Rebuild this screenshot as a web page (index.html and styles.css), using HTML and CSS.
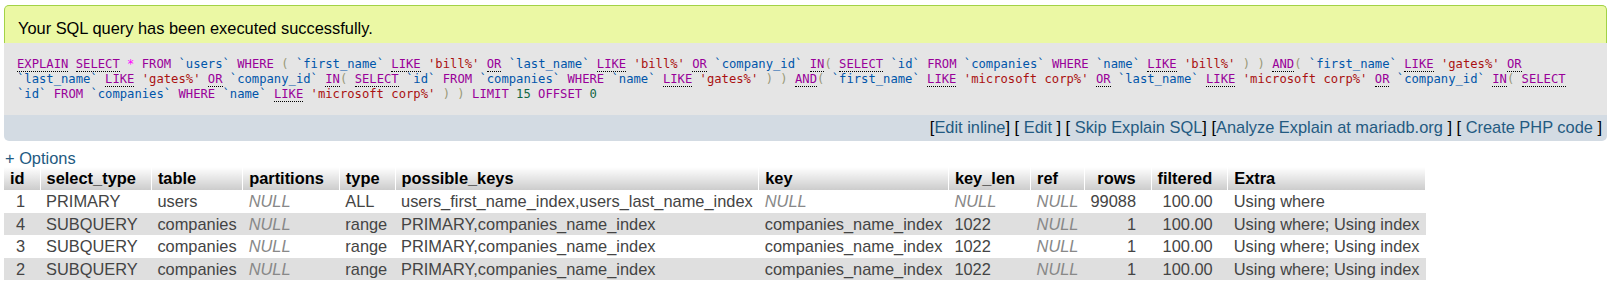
FILE: index.html
```
<!DOCTYPE html>
<html lang="en">
<head>
  <meta charset="UTF-8">
  <title>SQL result</title>
  <link rel="stylesheet" href="styles.css">
</head>
<body>

<div class="page">
  <div class="result-query">
    <div class="success">Your SQL query has been executed successfully.</div>
    <div class="sql-outer"><code class="sql"><a class="kw doc">EXPLAIN</a> <a class="kw doc">SELECT</a> <span class="op">*</span> <span class="kw">FROM</span> <span class="id">`users`</span> <span class="kw">WHERE</span> <span class="br">(</span> <span class="id">`first_name`</span> <a class="kw doc">LIKE</a> <span class="str">'bill%'</span> <a class="kw doc">OR</a> <span class="id">`last_name`</span> <a class="kw doc">LIKE</a> <span class="str">'bill%'</span> <a class="kw doc">OR</a> <span class="id">`company_id`</span> <a class="kw doc">IN</a><span class="br">(</span> <a class="kw doc">SELECT</a> <span class="id">`id`</span> <span class="kw">FROM</span> <span class="id">`companies`</span> <span class="kw">WHERE</span> <span class="id">`name`</span> <a class="kw doc">LIKE</a> <span class="str">'bill%'</span> <span class="br">)</span> <span class="br">)</span> <a class="kw doc">AND</a><span class="br">(</span> <span class="id">`first_name`</span> <a class="kw doc">LIKE</a> <span class="str">'gates%'</span> <a class="kw doc">OR</a> <span class="id">`last_name`</span> <a class="kw doc">LIKE</a> <span class="str">'gates%'</span> <a class="kw doc">OR</a> <span class="id">`company_id`</span> <a class="kw doc">IN</a><span class="br">(</span> <a class="kw doc">SELECT</a> <span class="id">`id`</span> <span class="kw">FROM</span> <span class="id">`companies`</span> <span class="kw">WHERE</span> <span class="id">`name`</span> <a class="kw doc">LIKE</a> <span class="str">'gates%'</span> <span class="br">)</span> <span class="br">)</span> <a class="kw doc">AND</a><span class="br">(</span> <span class="id">`first_name`</span> <a class="kw doc">LIKE</a> <span class="str">'microsoft corp%'</span> <a class="kw doc">OR</a> <span class="id">`last_name`</span> <a class="kw doc">LIKE</a> <span class="str">'microsoft corp%'</span> <a class="kw doc">OR</a> <span class="id">`company_id`</span> <a class="kw doc">IN</a><span class="br">(</span> <a class="kw doc">SELECT</a> <span class="id">`id`</span> <span class="kw">FROM</span> <span class="id">`companies`</span> <span class="kw">WHERE</span> <span class="id">`name`</span> <a class="kw doc">LIKE</a> <span class="str">'microsoft corp%'</span> <span class="br">)</span> <span class="br">)</span> <span class="kw">LIMIT</span> <span class="num-lit">15</span> <span class="kw">OFFSET</span> <span class="num-lit">0</span></code></div>
    <div class="tools">[<a href="#">Edit inline</a>] [ <a href="#">Edit</a> ] [ <a href="#">Skip Explain SQL</a>] [<a href="#">Analyze Explain at mariadb.org</a> ] [ <a href="#">Create PHP code</a> ]</div>
  </div>

  <div class="options"><a href="#">+ Options</a></div>

  <table class="explain">
    <thead>
      <tr>
        <th class="num">id</th>
        <th>select_type</th>
        <th>table</th>
        <th>partitions</th>
        <th>type</th>
        <th>possible_keys</th>
        <th>key</th>
        <th>key_len</th>
        <th>ref</th>
        <th class="num">rows</th>
        <th class="num">filtered</th>
        <th>Extra</th>
      </tr>
    </thead>
    <tbody>
      <tr class="odd">
        <td class="num">1</td>
        <td>PRIMARY</td>
        <td>users</td>
        <td class="null">NULL</td>
        <td>ALL</td>
        <td>users_first_name_index,users_last_name_index</td>
        <td class="null">NULL</td>
        <td class="null">NULL</td>
        <td class="null">NULL</td>
        <td class="num">99088</td>
        <td class="num">100.00</td>
        <td>Using where</td>
      </tr>
      <tr class="even">
        <td class="num">4</td>
        <td>SUBQUERY</td>
        <td>companies</td>
        <td class="null">NULL</td>
        <td>range</td>
        <td>PRIMARY,companies_name_index</td>
        <td>companies_name_index</td>
        <td>1022</td>
        <td class="null">NULL</td>
        <td class="num">1</td>
        <td class="num">100.00</td>
        <td>Using where; Using index</td>
      </tr>
      <tr class="odd">
        <td class="num">3</td>
        <td>SUBQUERY</td>
        <td>companies</td>
        <td class="null">NULL</td>
        <td>range</td>
        <td>PRIMARY,companies_name_index</td>
        <td>companies_name_index</td>
        <td>1022</td>
        <td class="null">NULL</td>
        <td class="num">1</td>
        <td class="num">100.00</td>
        <td>Using where; Using index</td>
      </tr>
      <tr class="even">
        <td class="num">2</td>
        <td>SUBQUERY</td>
        <td>companies</td>
        <td class="null">NULL</td>
        <td>range</td>
        <td>PRIMARY,companies_name_index</td>
        <td>companies_name_index</td>
        <td>1022</td>
        <td class="null">NULL</td>
        <td class="num">1</td>
        <td class="num">100.00</td>
        <td>Using where; Using index</td>
      </tr>
    </tbody>
  </table>
</div>

</body>
</html>
```

FILE: styles.css
```
body {
  margin: 0;
  background: #fff;
  font-family: "Liberation Sans", Arial, sans-serif;
  font-size: 16.4px;
  line-height: 18px;
  color: #444;
}

a {
  color: #235a81;
  text-decoration: none;
}

.page {
  padding: 5px 11px 0 4px;
}

.success {
  background: #ebf8a4;
  border: 1px solid #a2d246;
  border-bottom: 0;
  border-radius: 5px 5px 0 0;
  padding: 13px 13px 6px 13px;
  color: #000;
}

.sql-outer {
  background: #e5e5e5;
  padding: 14px 14px 13px 13px;
  font-family: "DejaVu Sans Mono", monospace;
  font-size: 12.2px;
  line-height: 15px;
  color: #000;
}

.sql .kw {
  color: #909;
}

.sql .doc {
  border-bottom: 1px dotted #000;
}

.sql .id {
  color: #05a;
}

.sql .str {
  color: #a11;
}

.sql .br {
  color: #997;
}

.sql .op {
  color: #f0f;
}

.sql .num-lit {
  color: #164;
}

.tools {
  background: #d3dbe3;
  text-align: right;
  padding: 3px 5px 5px;
  border-radius: 0 0 5px 5px;
  color: #000;
}

.options {
  margin: 8px 0 0 1px;
}

.explain {
  border-collapse: collapse;
  line-height: 18.4px;
}

.explain th {
  background: linear-gradient(#fff, #ccc);
  color: #000;
  font-weight: bold;
  text-align: left;
  padding: 2px 15px 3px 6px;
  border-right: 1px solid #fff;
}

.explain td {
  padding: 2px 6px;
  white-space: nowrap;
}

.explain .num {
  text-align: right;
  padding-right: 15px;
}

.explain tr.even td {
  background: #dfdfdf;
}

.explain .null {
  font-style: italic;
  color: #888;
}
```
